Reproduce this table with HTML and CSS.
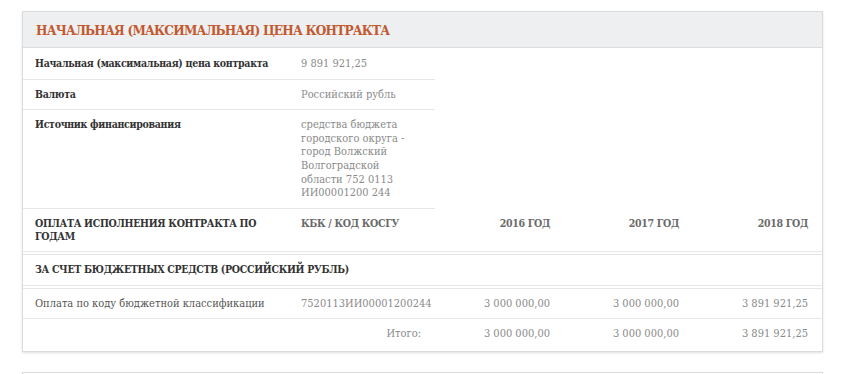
FILE: index.html
```html
<!DOCTYPE html>
<html lang="ru">
<head>
<meta charset="utf-8">
<link rel="stylesheet" href="styles.css">
</head>
<body>
<div class="card">
  <div class="card-head"><h2 class="card-title">НАЧАЛЬНАЯ (МАКСИМАЛЬНАЯ) ЦЕНА КОНТРАКТА</h2></div>
  <table class="info">
    <colgroup><col class="c-label"><col class="c-code"></colgroup>
    <tr><th>Начальная (максимальная) цена контракта</th><td>9 891 921,25</td></tr>
    <tr><th>Валюта</th><td>Российский рубль</td></tr>
    <tr><th>Источник финансирования</th><td>средства бюджета городского округа - город Волжский Волгоградской области 752 0113 ИИ00001200 244</td></tr>
  </table>
  <table class="pay">
    <colgroup><col class="c-label"><col class="c-code"><col class="c-year"><col class="c-year"><col class="c-year"></colgroup>
    <thead>
      <tr><th class="t-main">ОПЛАТА ИСПОЛНЕНИЯ КОНТРАКТА ПО ГОДАМ</th><th class="t-sub">КБК / КОД КОСГУ</th><th class="t-sub num">2016 ГОД</th><th class="t-sub num">2017 ГОД</th><th class="t-sub num">2018 ГОД</th></tr>
    </thead>
    <tbody>
      <tr class="group"><th class="t-main" colspan="5">ЗА СЧЕТ БЮДЖЕТНЫХ СРЕДСТВ (РОССИЙСКИЙ РУБЛЬ)</th></tr>
      <tr><td class="dark">Оплата по коду бюджетной классификации</td><td>7520113ИИ00001200244</td><td class="num">3 000 000,00</td><td class="num">3 000 000,00</td><td class="num">3 891 921,25</td></tr>
      <tr class="total"><td></td><td class="num">Итого:</td><td class="num">3 000 000,00</td><td class="num">3 000 000,00</td><td class="num">3 891 921,25</td></tr>
    </tbody>
  </table>
</div>
<div class="card next"></div>
</body>
</html>
```
FILE: styles.css
```css
html, body { margin: 0; background: #fff; }
body {
  padding: 11px 0 0 22px;
  font-family: "DejaVu Serif Condensed", "DejaVu Serif", serif;
  font-size: 11px;
  color: #333;
}
.card {
  width: 799px;
  border: 1px solid #dcdcdc;
  box-shadow: 0 1px 2px rgba(0,0,0,0.12);
  background: #fff;
}
.card.next { margin-top: 20px; height: 10px; }
.card-head {
  background: #eeeff1;
  border-bottom: 1px solid #dcdcdc;
  height: 35px;
  display: flex;
  align-items: center;
  padding-left: 13px;
}
.card-title {
  margin: 0;
  font-size: 13.5px;
  letter-spacing: -0.8px;
  font-weight: bold;
  color: #c2582e;
}
table { border-collapse: separate; border-spacing: 0; table-layout: fixed; }
.info { width: 412px; }
.pay { width: 799px; }
.c-label { width: 265px; }
.c-code { width: 147px; }
.c-year { width: 129px; }
th, td {
  text-align: left;
  vertical-align: top;
  padding: 8px 14px 8px 12px;
  line-height: 13.6px;
  border-bottom: 1px solid #e6e6e6;
}
th {
  font-weight: bold;
  color: #333;
  font-size: 10.5px;
  letter-spacing: -0.3px;
}
td { color: #8a8a8a; }
.info tr:first-child th, .info tr:first-child td { padding-top: 9px; }
.info td { padding-left: 13px; }
.pay td:nth-child(2), .pay th:nth-child(2) { padding-left: 13px; }
.pay thead th { color: #6a6a6a; border-bottom: 4px double #e6e6e6; padding-bottom: 7px; }
.pay thead th.t-main { color: #333; }
.pay .group th { border-bottom: 4px double #e6e6e6; padding-top: 8px; }
.pay td.dark { color: #555; }
.num { text-align: right; }
.pay .total td { border-bottom: 0; padding-bottom: 10px; }
```
